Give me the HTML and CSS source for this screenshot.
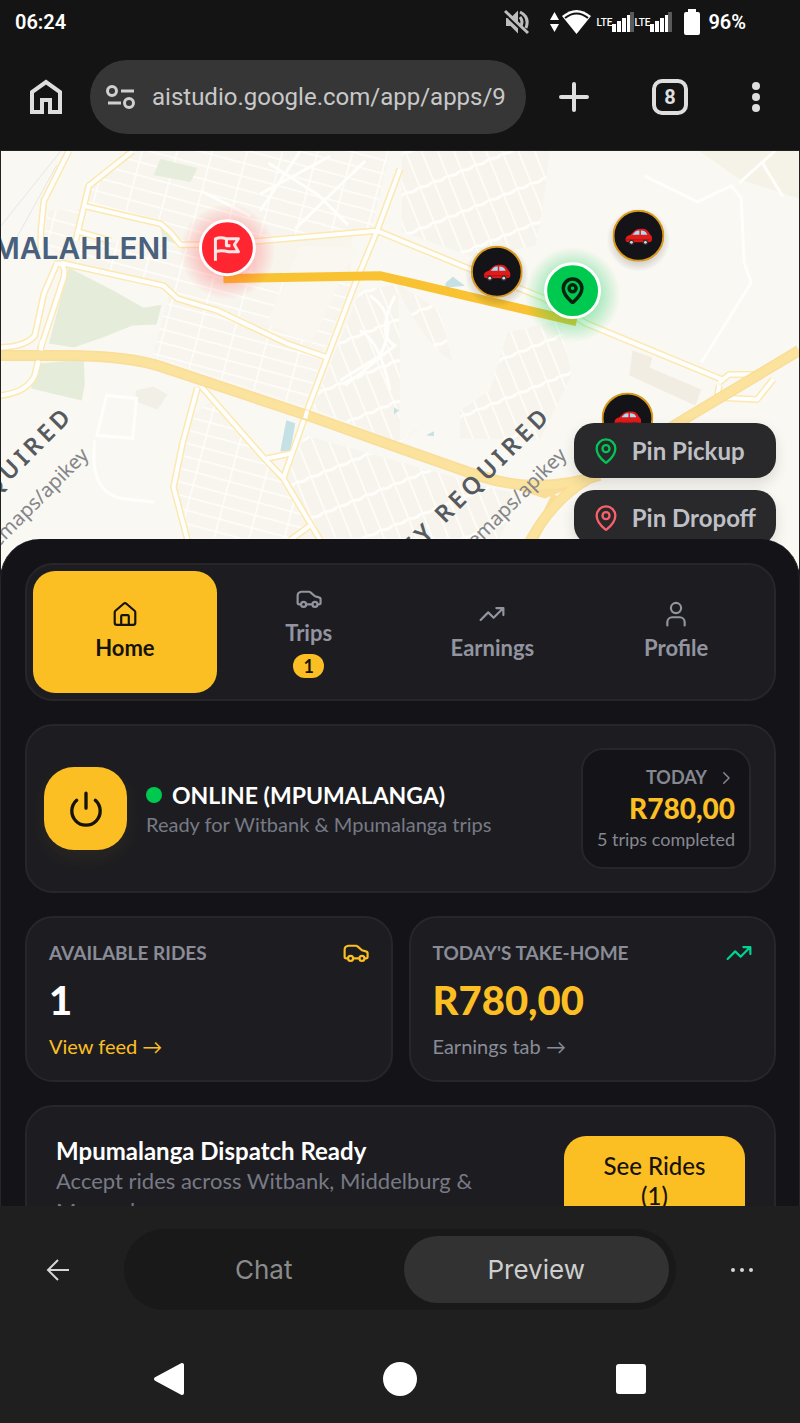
FILE: index.html
```html
<!DOCTYPE html>
<html lang="en">

<head>
    <meta charset="UTF-8">
    <meta name="viewport" content="width=device-width, initial-scale=1.0">
    <title>Driver Home</title>
    <link rel="stylesheet" href="styles.css">
</head>

<body>
    <!-- shared icons -->
    <svg class="icon-defs" width="0" height="0" aria-hidden="true">
        <symbol id="i-pin" viewBox="0 0 24 24">
            <path d="M20 10c0 5-5.500 10.200-7.400 11.800a1 1 0 0 1-1.200 0C9.500 20.200 4 15 4 10a8 8 0 0 1 16 0z" />
            <circle cx="12" cy="10" r="3" />
        </symbol>
        <symbol id="i-car" viewBox="0 0 24 24">
            <path d="M4.500 17H3a1.500 1.500 0 0 1-1.500-1.500V9.500A4 4 0 0 1 4.800 5.300H12a2 2 0 0 1 1.400.6L17.500 9.500l3.600 1a2 2 0 0 1 1.600 2V15.500A1.500 1.500 0 0 1 21.200 17H20M9.500 17h5.500" />
            <circle cx="7" cy="17" r="2.300" />
            <circle cx="17.500" cy="17" r="2.300" />
        </symbol>
        <symbol id="i-trend" viewBox="0 0 24 24">
            <path d="M1.500 17.500l7-7 5 5L22 7M16 6.500h6.500V13" />
        </symbol>
        <symbol id="m-car" viewBox="-26 -26 52 52">
            <circle r="25" fill="#131318" stroke="#d99a1c" stroke-width="2" />
            <path d="M-13 4q0-4 5-5l4-4q2-2 6-2h3q3 0 5 3l2 3q2 1 1.500 5.500-.5 2-3 2h-21q-2.500 0-2.500-2.500z" fill="#e01b1b" />
            <path d="M-6-1l3-3.200q1-1 4-1v4.200zM2.500-5.200q3.500-.2 5 1.700L9-1H2.500z" fill="#a6dcf5" />
            <path d="M-13 4h25" stroke="#b50f12" stroke-width="1" />
            <circle cx="-7" cy="6.500" r="2.600" fill="#333" /><circle cx="-7" cy="6.500" r="1.400" fill="#ddd" />
            <circle cx="7" cy="6.500" r="2.600" fill="#333" /><circle cx="7" cy="6.500" r="1.400" fill="#ddd" />
        </symbol>
    </svg>

    <header class="status-bar">
        <span class="clock">06:24</span>
        <div class="status-icons">
            <svg class="muted" width="26" height="26" viewBox="0 0 26 26" fill="none" stroke="#bdbdbd" stroke-width="2">
                <path d="M3 10h4l6-6v18l-6-6H3z" fill="#bdbdbd" />
                <path d="M16 8q4 5 0 10M16 3q10 5 6 16" stroke-width="3" />
                <path d="M1 4l23 22" stroke="#141414" stroke-width="4" />
                <path d="M1 2l23 22" stroke-width="3" />
            </svg>
            <svg width="9" height="20" viewBox="0 0 9 20" fill="#fff"><path d="M4.500 0L9 8H0zM0 12h9l-4.500 8z" /></svg>
            <svg class="wifi" width="29" height="26" viewBox="0 0 29 26"><path d="M0 7Q14.500-5 29 7L14.500 25z" fill="#fff" /><path d="M3 9Q14.500 0 26 9" fill="none" stroke="#141414" stroke-width="2" /></svg>
            <span class="lte">LTE</span>
            <svg width="22" height="20" viewBox="0 0 22 20" fill="#fff"><path d="M0 12h4v8H0zM5 9h4v11H5zM10 6h4v14h-4zM15 3h3v17h-3z" /><path d="M18 0h4v20h-4z" fill="#5a5a5a" /></svg>
            <span class="lte">LTE</span>
            <svg width="22" height="20" viewBox="0 0 22 20" fill="#fff"><path d="M0 12h4v8H0zM5 9h4v11H5zM10 6h4v14h-4zM15 3h3v17h-3z" /><path d="M18 0h4v20h-4z" fill="#5a5a5a" /></svg>
            <svg class="battery" width="16" height="26" viewBox="0 0 16 26" fill="#fff"><path d="M4 0h8v3h2a2 2 0 0 1 2 2v19a2 2 0 0 1-2 2H2a2 2 0 0 1-2-2V5a2 2 0 0 1 2-2h2z" /></svg>
            <span class="percent">96%</span>
        </div>
    </header>

    <div class="browser-bar">
        <button class="tool" aria-label="Home page">
            <svg width="32" height="36" viewBox="0 0 32 36" fill="none" stroke="#dedede" stroke-width="4"><path d="M2 33V13L16 3l14 10v20H20V21h-8v12z" /></svg>
        </button>
        <div class="url-box">
            <svg width="30" height="26" viewBox="0 0 30 26" fill="none" stroke="#d0d0d0" stroke-width="3"><circle cx="6" cy="7" r="4.500" /><path d="M15 7h13M2 19h13" /><circle cx="23" cy="19" r="4.500" /></svg>
            <input type="text" aria-label="Address" value="aistudio.google.com/app/apps/9">
        </div>
        <button class="tool" aria-label="New tab">
            <svg width="32" height="32" viewBox="0 0 32 32" stroke="#dedede" stroke-width="4" stroke-linecap="round"><path d="M16 3v26M3 16h26" /></svg>
        </button>
        <button class="tool tabs-count" aria-label="Open tabs">8</button>
        <button class="tool" aria-label="Menu">
            <svg width="10" height="32" viewBox="0 0 10 32" fill="#dedede"><circle cx="5" cy="5" r="4" /><circle cx="5" cy="16" r="4" /><circle cx="5" cy="27" r="4" /></svg>
        </button>
    </div>

    <main class="app">
        <section class="map">
            <svg class="map-canvas" viewBox="0 0 800 420" preserveAspectRatio="xMidYMin slice">
                <defs>
                    <pattern id="streets" width="34" height="13" patternUnits="userSpaceOnUse" patternTransform="rotate(15)">
                        <rect width="34" height="13" fill="#f7f5ed" />
                        <path d="M0 0h34M0 0v13" stroke="#fffefb" stroke-width="3" />
                    </pattern>
                    <pattern id="streets2" width="15" height="38" patternUnits="userSpaceOnUse" patternTransform="rotate(-22)">
                        <rect width="15" height="38" fill="#f6f4ec" />
                        <path d="M0 0q8 5 15 0M0 0v38" fill="none" stroke="#fffefb" stroke-width="3" />
                    </pattern>
                    <radialGradient id="redGlow"><stop offset="50%" stop-color="#ff2632" stop-opacity=".28" /><stop offset="100%" stop-color="#ff2632" stop-opacity="0" /></radialGradient>
                    <radialGradient id="greenGlow"><stop offset="50%" stop-color="#00c950" stop-opacity=".35" /><stop offset="100%" stop-color="#00c950" stop-opacity="0" /></radialGradient>
                    <radialGradient id="darkGlow"><stop offset="70%" stop-color="#000" stop-opacity=".15" /><stop offset="100%" stop-color="#000" stop-opacity="0" /></radialGradient>
                </defs>
                <rect width="800" height="420" fill="#faf8f2" />

                <!-- residential blocks -->
                <path d="M90 36L135 0H390L372 78 257 88 180 92 160 70 84 52z" fill="url(#streets)" />
                <path d="M48 60L82 58 74 88 180 96 352 132 322 204 217 158 177 146 163 133 62 110 42 90z" fill="url(#streets)" />
                <path d="M168 145L322 207 305 256 152 205z" fill="url(#streets)" />
                <path d="M360 140L398 133 440 160 452 210 430 270 400 292 312 258z" fill="url(#streets2)" />
                <path d="M402 0h148l-6 50-8 45-60 12-74-26z" fill="url(#streets2)" />
                <path d="M186 270L212 250 285 330 318 388H188L176 336z" fill="url(#streets)" />
                <path d="M305 285L400 312 520 345 500 388H320L286 328z" fill="url(#streets2)" />
                <path d="M508 182L560 170 572 225 540 290 460 288 460 260 490 240z" fill="url(#streets2)" />
                <path d="M700 0h100v48l-60-20z" fill="#f5f2e7" />
                <path d="M257 88L352 84 350 128 260 118z" fill="#f8f5ed" />
                <path d="M300 95l56 2-45 96-45-20z" fill="#faf7f0" />
                <path d="M398 140Q430 200 452 210L430 270 400 290V200z" fill="#faf8f2" />
                <path d="M268 12l50 32 30 30M300 0l-40 60M330 5l-70 38M365 10l-70 68M200 40l50 25M370 145q30 20 10 60l-40 25M395 145q-20 40 0 50l-50 40M360 180q20 10 30 60" fill="none" stroke="#fffefb" stroke-width="3" />

                <!-- parks, water, buildings -->
                <path d="M68 117l45 23 30 17 18-3-5 20-24 1-30 12-29 10-25-4z" fill="#e5edda" />
                <path d="M38 213l45-4 1 25-3 16-51-12z" fill="#e5edda" />
                <path d="M160 8l37 9-7 14-37-7zM160 78l12 4 8 13-18-7z" fill="#e7eddc" />
                <path d="M286 270l9 3-5 29-10-1z" fill="#c5e1e6" />
                <path d="M394 257l5 3-5 4zM426 285l8-4v5zM446 132l7-6 12 9-20 2z" fill="#c5e1e6" />
                <path d="M633 200l20 7-3 10 52 22-6 16-66-30z" fill="#f2ede2" />
                <path d="M135 240l18-4 14 8-10 15-22-8z" fill="#f2efe7" />
                <path d="M106 245l30 3-4 40-36-3zM94 290q-6 50 25 58l35 4" fill="none" stroke="#fffefb" stroke-width="3" />
                <path d="M0 75L60 0M3 110L56 14" fill="none" stroke="#e5e6e8" stroke-width="1" />
                <path d="M645 25l53 26 34-16 10 12 3 65 7 20-50 80M740 32L776 0M762 10l22 36" fill="none" stroke="#fffefb" stroke-width="3" />

                <!-- roads -->
                <g class="road-case">
                    <path d="M68 0L43 50 40 80V98" />
                    <path d="M132 0L88 35 75 90M83 55L160 73 170 82 180 94H200" />
                    <path d="M75 80L110 90M60 112L163 135 177 148 217 160 287 193 327 207" />
                    <path d="M400 18L377 80 355 133 327 207 307 260 293 300 283 328" />
                    <path d="M200 235L263 307 283 328 320 390M197 237L182 293 173 337 187 390M263 309l29-6M290 390l19-14" />
                    <path d="M250 91L377 80 467 117 543 147 587 173 725 230" />
                    <path d="M56 113L43 143 34 185Q25 196 0 197M54 113q12-2 9 14L40 197 34 225Q26 242 0 245" />
                    <path d="M720 232l10-8h30M720 235l-2 12 40 2 16-20" />
                </g>
                <g class="road">
                    <path d="M68 0L43 50 40 80V98" />
                    <path d="M132 0L88 35 75 90M83 55L160 73 170 82 180 94H200" />
                    <path d="M75 80L110 90M60 112L163 135 177 148 217 160 287 193 327 207" />
                    <path d="M400 18L377 80 355 133 327 207 307 260 293 300 283 328" />
                    <path d="M200 235L263 307 283 328 320 390M197 237L182 293 173 337 187 390M263 309l29-6M290 390l19-14" />
                    <path d="M250 91L377 80 467 117 543 147 587 173 725 230" />
                    <path d="M56 113L43 143 34 185Q25 196 0 197M54 113q12-2 9 14L40 197 34 225Q26 242 0 245" />
                    <path d="M720 232l10-8h30M720 235l-2 12 40 2 16-20" />
                </g>
                <g fill="none" stroke="#f9dd98" stroke-width="11">
                    <path d="M0 205H70Q130 206 160 216L310 266 400 298 480 326Q540 345 600 325M800 200L683 270 590 328Q550 350 526 400" />
                    <path d="M475 322l70 22 30-12M556 345l-22 45" stroke-width="8" />
                </g>
                <g fill="none" stroke="#fbe39d" stroke-width="8">
                    <path d="M0 205H70Q130 206 160 216L310 266 400 298 480 326Q540 345 600 325M800 200L683 270 590 328Q550 350 526 400" />
                </g>
                <path d="M40 200l1-10M34 225l4-15M307 260l-2 8" stroke="#fff" stroke-width="4" />

                <!-- labels -->
                <text x="168" y="108" text-anchor="end" class="city">EMALAHLENI</text>
                <text class="notice" text-anchor="end" transform="translate(553 266) rotate(-45)">API KEY REQUIRED</text>
                <text class="notice" text-anchor="end" transform="translate(74 266) rotate(-45)">API KEY REQUIRED</text>
                <text class="notice-url" text-anchor="end" transform="translate(568 306) rotate(-45)">basemaps/apikey</text>
                <text class="notice-url" text-anchor="end" transform="translate(89 306) rotate(-45)">basemaps/apikey</text>

                <!-- route and markers -->
                <path d="M223 128L380 125 410 132 577 171" fill="none" stroke="#f8c232" stroke-width="9" />
                <circle cx="227" cy="101" r="48" fill="url(#redGlow)" />
                <circle cx="227" cy="97" r="27" fill="#ff2632" stroke="#fff" stroke-width="3" />
                <path d="M215 110V88q5-2 11 0h12l-4 6 4 7h-10q-7-2-13 0M226 88v7h4" fill="none" stroke="#ffe6e6" stroke-width="3" stroke-linejoin="round" />
                <circle cx="497" cy="125" r="32" fill="url(#darkGlow)" />
                <circle cx="639" cy="89" r="32" fill="url(#darkGlow)" />
                <use href="#m-car" x="471" y="95" width="52" height="52" />
                <use href="#m-car" x="613" y="59" width="52" height="52" />
                <use href="#m-car" x="602" y="242" width="52" height="52" />
                <circle cx="573" cy="144" r="48" fill="url(#greenGlow)" />
                <circle cx="573" cy="140" r="27" fill="#00c950" stroke="#fff" stroke-width="3" />
                <use href="#i-pin" x="559" y="126" width="28" height="28" fill="none" stroke="#06240f" stroke-width="3" />
            </svg>
            <div class="pin-actions">
                <button class="pin-btn"><svg class="icon green" width="28" height="28"><use href="#i-pin" /></svg>Pin Pickup</button>
                <button class="pin-btn"><svg class="icon red" width="28" height="28"><use href="#i-pin" /></svg>Pin Dropoff</button>
            </div>
        </section>

        <section class="sheet">
            <nav class="tabs card">
                <button class="tab active">
                    <svg class="icon" width="26" height="26" viewBox="0 0 24 24"><path d="M2.500 10.500a2 2 0 0 1 .7-1.500l7.500-6.500a2 2 0 0 1 2.600 0L20.800 9a2 2 0 0 1 .7 1.500V20a2 2 0 0 1-2 2h-15a2 2 0 0 1-2-2zM8.500 22v-8a1 1 0 0 1 1-1h5a1 1 0 0 1 1 1v8" /></svg>
                    <span>Home</span>
                </button>
                <button class="tab">
                    <svg class="icon" width="26" height="26"><use href="#i-car" /></svg>
                    <span>Trips</span>
                    <span class="badge">1</span>
                </button>
                <button class="tab">
                    <svg class="icon" width="26" height="26"><use href="#i-trend" /></svg>
                    <span>Earnings</span>
                </button>
                <button class="tab">
                    <svg class="icon" width="26" height="26" viewBox="0 0 24 24"><circle cx="12" cy="6.500" r="4.700" /><path d="M4 22.500v-3a4.500 4.500 0 0 1 4.500-4.500h7a4.500 4.500 0 0 1 4.500 4.500v3" /></svg>
                    <span>Profile</span>
                </button>
            </nav>

            <div class="online card">
                <button class="power" aria-label="Go offline">
                    <svg class="icon" width="40" height="40" viewBox="0 0 24 24"><path d="M12 2.500v9M17.600 6.800a8.500 8.500 0 1 1-11.200 0" /></svg>
                </button>
                <div class="online-text">
                    <h2><span class="dot"></span>ONLINE (MPUMALANGA)</h2>
                    <p>Ready for Witbank &amp; Mpumalanga trips</p>
                </div>
                <button class="today">
                    <span class="today-label">TODAY <svg class="icon" width="18" height="18" viewBox="0 0 24 24"><path d="M9 5l7 7-7 7" /></svg></span>
                    <strong>R780,00</strong>
                    <span>5 trips completed</span>
                </button>
            </div>

            <div class="stats">
                <div class="stat card">
                    <div class="stat-head"><h3>AVAILABLE RIDES</h3><svg class="icon yellow" width="26" height="26"><use href="#i-car" /></svg></div>
                    <strong>1</strong>
                    <a href="#feed" class="yellow">View feed →</a>
                </div>
                <div class="stat card">
                    <div class="stat-head"><h3>TODAY'S TAKE-HOME</h3><svg class="icon mint" width="26" height="26"><use href="#i-trend" /></svg></div>
                    <strong class="yellow">R780,00</strong>
                    <a href="#earnings">Earnings tab →</a>
                </div>
            </div>

            <div class="dispatch card">
                <div class="dispatch-text">
                    <h2>Mpumalanga Dispatch Ready</h2>
                    <p>Accept rides across Witbank, Middelburg &amp; Mpumalanga.</p>
                </div>
                <button class="see-rides">See Rides (1)</button>
            </div>
        </section>
    </main>

    <footer class="studio-bar">
        <button class="tool" aria-label="Back">
            <svg width="24" height="24" viewBox="0 0 24 24" fill="none" stroke="#d6d6d6" stroke-width="2"><path d="M12 2L2 12l10 10M2 12h21" /></svg>
        </button>
        <div class="switch">
            <button>Chat</button>
            <button class="active">Preview</button>
        </div>
        <button class="tool" aria-label="More">
            <svg width="24" height="6" viewBox="0 0 24 6" fill="#d6d6d6"><circle cx="3" cy="3" r="2" /><circle cx="12" cy="3" r="2" /><circle cx="21" cy="3" r="2" /></svg>
        </button>
    </footer>
    <div class="android-nav">
        <button class="tool" aria-label="System back"><svg width="34" height="34" viewBox="0 0 34 34" fill="#fff" stroke="#fff" stroke-width="4" stroke-linejoin="round"><path d="M4 17L30 3v28z" /></svg></button>
        <button class="tool" aria-label="System home"><svg width="34" height="34" viewBox="0 0 34 34" fill="#fff"><circle cx="17" cy="17" r="17" /></svg></button>
        <button class="tool" aria-label="Recent apps"><svg width="34" height="34" viewBox="0 0 34 34" fill="#fff"><rect x="2" y="2" width="30" height="30" rx="3" /></svg></button>
    </div>
</body>

</html>
```
FILE: styles.css
```css
* {
    box-sizing: border-box;
}

body {
    margin: 0;
    height: 100vh;
    display: flex;
    flex-direction: column;
    overflow: hidden;
    background: #141414;
    color: #fff;
    font-family: Lato, "Liberation Sans", sans-serif;
}

h2,
h3,
p {
    margin: 0;
}

button {
    font-family: inherit;
    border: none;
    cursor: pointer;
}

a {
    text-decoration: none;
}

.icon-defs {
    position: absolute;
}

.icon {
    fill: none;
    stroke: currentColor;
    stroke-width: 2;
    stroke-linecap: round;
    stroke-linejoin: round;
    flex-shrink: 0;
}

/* Status bar */
.status-bar {
    display: flex;
    justify-content: space-between;
    align-items: center;
    height: 44px;
    padding: 0 54px 0 15px;
    font-family: Roboto, sans-serif;
    font-size: 20px;
    font-weight: 600;
}

.status-icons {
    display: flex;
    align-items: center;
}

.muted {
    margin-right: 20px;
}

.wifi {
    margin: 0 6px 0 3px;
}

.lte {
    font-size: 10px;
    font-weight: 500;
}

.battery {
    margin: 0 8px 0 12px;
}

/* Browser toolbar */
.browser-bar {
    display: flex;
    align-items: center;
    height: 106px;
    padding: 0 22px 0 24px;
    gap: 22px;
}

.tool {
    display: flex;
    justify-content: center;
    align-items: center;
    width: 44px;
    height: 44px;
    padding: 0;
    background: none;
    color: #dedede;
    flex-shrink: 0;
}

.url-box {
    flex: 1;
    display: flex;
    align-items: center;
    gap: 16px;
    height: 74px;
    margin-right: 4px;
    padding: 0 14px 0 16px;
    border-radius: 37px;
    background: #363636;
}

.url-box svg {
    flex-shrink: 0;
}

.url-box input {
    flex: 1;
    min-width: 0;
    padding: 0;
    border: none;
    outline: none;
    background: none;
    color: #c8c8c8;
    font-family: Roboto, sans-serif;
    font-size: 24px;
}

.tabs-count {
    width: 36px;
    height: 36px;
    margin: 0 24px 0 34px;
    border: 4px solid #dedede;
    border-radius: 10px;
    font-family: Roboto, sans-serif;
    font-size: 20px;
    font-weight: 700;
}

/* App area */
.app {
    flex: 1;
    min-height: 0;
    overflow: hidden;
    background: #141418;
}

.map {
    position: relative;
    height: 420px;
    border: 1px solid #222;
    border-bottom: none;
    overflow: hidden;
}

.map-canvas {
    display: block;
    width: 100%;
    height: 100%;
}

.road-case,
.road {
    fill: none;
    stroke: #fde8b0;
    stroke-width: 7;
    stroke-linejoin: round;
}

.road {
    stroke: #fff;
    stroke-width: 4;
}

.city {
    font: 600 30px Inter, sans-serif;
    fill: #49617d;
}

.notice {
    font: 600 24px "Noto Sans", sans-serif;
    letter-spacing: 4px;
    fill: #555a60;
}

.notice-url {
    font: 400 20px "Noto Sans", sans-serif;
    fill: #83868a;
}

.pin-actions {
    position: absolute;
    right: 23px;
    top: 272px;
    display: flex;
    flex-direction: column;
    gap: 12px;
}

.pin-btn {
    display: flex;
    align-items: center;
    gap: 12px;
    height: 55px;
    padding: 0 20px 0 18px;
    border-radius: 20px;
    background: #29292b;
    color: #bfc0c6;
    font-size: 24px;
    font-weight: 700;
    box-shadow: 0 6px 14px rgba(0, 0, 0, 0.12);
}

.green {
    color: #05c456;
}

.red {
    color: #f9616a;
}

.yellow {
    color: #fbbf24;
}

.mint {
    color: #00d492;
}

.sheet {
    position: relative;
    display: flex;
    flex-direction: column;
    gap: 23px;
    margin-top: -31px;
    padding: 24px 23px 24px 24px;
    border-left: 1px solid #26262b;
    border-right: 1px solid #26262b;
    border-radius: 40px 40px 0 0;
    background: #141418;
}

.card {
    border: 2px solid #26262b;
    border-radius: 28px;
    background: #1d1d21;
}

/* Tabs */
.tabs {
    display: grid;
    grid-template-columns: repeat(4, 1fr);
    padding: 6px;
}

.tab {
    display: flex;
    flex-direction: column;
    justify-content: center;
    align-items: center;
    gap: 6px;
    min-height: 122px;
    border-radius: 22px;
    background: none;
    color: #9294a0;
    font-size: 22px;
    font-weight: 700;
    line-height: 30px;
}

.tab.active {
    background: #fbbf24;
    color: #17130a;
}

.badge {
    padding: 0 10px;
    border-radius: 12px;
    background: #fbbf24;
    color: #17130a;
    font-size: 18px;
    line-height: 24px;
}

/* Online card */
.online {
    display: flex;
    align-items: center;
    gap: 19px;
    padding: 22px 23px 22px 17px;
}

.power {
    display: flex;
    justify-content: center;
    align-items: center;
    width: 83px;
    height: 83px;
    border-radius: 30px;
    background: #fbbf24;
    color: #17130a;
    box-shadow: 0 8px 18px rgba(251, 191, 36, 0.06);
}

.online-text {
    flex: 1;
}

h2 {
    font-size: 24px;
    line-height: 30px;
    font-weight: 700;
}

.online-text h2 {
    display: flex;
    align-items: center;
    gap: 10px;
    font-size: 23px;
}

.dot {
    width: 16px;
    height: 16px;
    border-radius: 50%;
    background: #00c950;
}

.online-text p {
    color: #777a85;
    font-size: 20px;
    line-height: 28px;
}

.today {
    display: flex;
    flex-direction: column;
    align-items: flex-end;
    padding: 12px 14px;
    border: 2px solid #26262b;
    border-radius: 22px;
    background: #141418;
    color: #858791;
    font-size: 18px;
    line-height: 31px;
}

.today-label {
    display: flex;
    align-items: center;
    gap: 10px;
    font-weight: 700;
}

.today strong {
    color: #fbbf24;
    font-size: 28px;
    font-weight: 900;
}

/* Stats */
.stats {
    display: grid;
    grid-template-columns: 1fr 1fr;
    gap: 16px;
}

.stat {
    display: flex;
    flex-direction: column;
    align-items: flex-start;
    gap: 14px;
    padding: 22px;
}

.stat-head {
    display: flex;
    justify-content: space-between;
    align-items: center;
    width: 100%;
}

.stat h3 {
    color: #8a8c98;
    font-size: 19px;
    line-height: 26px;
    font-weight: 700;
}

.stat strong {
    font-size: 40px;
    line-height: 40px;
    font-weight: 900;
}

.stat a {
    font-size: 20px;
    line-height: 24px;
}

.stat a:not(.yellow) {
    color: #8a8c98;
}

/* Dispatch card */
.dispatch {
    display: flex;
    align-items: flex-start;
    gap: 60px;
    padding: 29px;
}

.dispatch-text {
    flex: 1;
}

.dispatch p {
    color: #777a85;
    font-size: 22px;
    line-height: 30px;
}

.see-rides {
    width: 181px;
    padding: 15px 30px;
    border-radius: 22px;
    background: #fbbf24;
    color: #17130a;
    font-size: 24px;
    font-weight: 500;
    line-height: 30px;
}

/* Bottom bars */
.studio-bar {
    display: flex;
    justify-content: space-between;
    align-items: center;
    gap: 44px;
    padding: 23px 36px 24px;
    background: #1f1f1f;
}

.switch {
    flex: 1;
    display: grid;
    grid-template-columns: 1fr 1fr;
    gap: 7px;
    padding: 7px;
    border-radius: 41px;
    background: #191919;
}

.switch button {
    height: 67px;
    border-radius: 34px;
    background: none;
    color: #8b8b8b;
    font-family: Inter, sans-serif;
    font-size: 26px;
}

.switch .active {
    background: #323232;
    color: #cfcfcf;
}

.android-nav {
    display: flex;
    justify-content: space-around;
    align-items: center;
    height: 89px;
    padding: 0 54px;
    background: #1f1f1f;
}
```
